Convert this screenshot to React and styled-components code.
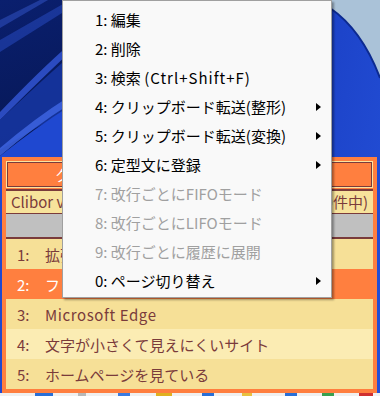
import styled, { createGlobalStyle } from "styled-components";

const GlobalStyle = createGlobalStyle`
  html, body {
    margin: 0;
    padding: 0;
    width: 380px;
    height: 396px;
    overflow: hidden;
  }
`;

const Desktop = styled.div`
  position: relative;
  width: 380px;
  height: 396px;
  overflow: hidden;
  display: flex;
  flex-direction: column;
  justify-content: flex-end;
  font-family: "Noto Sans CJK JP", sans-serif;
`;

const Wallpaper = styled.svg`
  position: absolute;
  left: 0;
  top: 0;
  z-index: 0;
`;

const Window = styled.div`
  position: relative;
  z-index: 1;
  width: 375px;
  margin-left: 2px;
  box-sizing: border-box;
  padding: 4px;
  background: #ff7f3f;
`;

const TitleButton = styled.div`
  height: 27px;
  box-sizing: border-box;
  border: 1px solid #fbe3a0;
  box-shadow: inset 0 0 0 1px #7a3b3b;
  background: #ff7f3f;
  color: #ffffff;
  font-size: 15px;
  line-height: 25px;
  padding-left: 48px;
  margin-bottom: 1px;
  white-space: nowrap;
  overflow: hidden;
`;

const StatusBar = styled.div`
  height: 22px;
  border-top: 2px solid #7a3b3b;
  border-bottom: 1px solid #7a3b3b;
  background: #f7e39b;
  color: #7a3b3b;
  font-size: 15px;
  line-height: 22px;
  padding: 0 5px;
  display: flex;
  justify-content: space-between;
  white-space: nowrap;
`;

const GrayBar = styled.div`
  height: 23px;
  background: #c0c0c0;
  border-bottom: 2px solid #7a3b3b;
`;

const Row = styled.div`
  height: 30px;
  display: flex;
  align-items: center;
  padding-left: 11px;
  font-size: 15px;
  white-space: nowrap;
  color: ${(p) => (p.$selected ? "#ffffff" : "#7a3b3b")};
  background: ${(p) =>
    p.$selected ? "#ff7f3f" : p.$even ? "#fbecb3" : "#f6e097"};
`;

const RowNo = styled.span`
  width: 28px;
`;

/* latin runs are a little wider in the Windows UI font */
const Latin = styled.span`
  letter-spacing: ${(p) => p.$spread || 0.6}px;
`;

const Taskbar = styled.div`
  position: relative;
  z-index: 1;
  height: 3px;
  background: #f0f0f0;
  display: flex;
`;

const TaskIcon = styled.span`
  width: ${(p) => p.$w}px;
  margin-left: ${(p) => p.$x}px;
  background: ${(p) => p.$c};
`;

const Menu = styled.div`
  position: absolute;
  z-index: 2;
  left: 62px;
  top: 0;
  width: 270px;
  box-sizing: border-box;
  padding: 4px 0 2px;
  background: #f9f9f9;
  border: 1px solid #a0a0a0;
  box-shadow: 2px 2px 2px rgba(0, 0, 0, 0.35);
`;

const MenuItem = styled.div`
  height: 29px;
  display: flex;
  align-items: center;
  padding: 0 10px 0 32px;
  font-size: 15px;
  white-space: pre;
  color: ${(p) => (p.$disabled ? "#a0a0a0" : "#000000")};
`;

const Arrow = styled.span`
  margin-left: auto;
  width: 0;
  height: 0;
  border-left: 5px solid #000;
  border-top: 4.5px solid transparent;
  border-bottom: 4.5px solid transparent;
`;

const menuItems = [
  { label: "1: 編集" },
  { label: "2: 削除" },
  { label: "3: 検索 ", latin: "(Ctrl+Shift+F)" },
  { label: "4: クリップボード転送(整形)", sub: true },
  { label: "5: クリップボード転送(変換)", sub: true },
  { label: "6: 定型文に登録", sub: true },
  { label: "7: 改行ごとにFIFOモード", disabled: true },
  { label: "8: 改行ごとにLIFOモード", disabled: true },
  { label: "9: 改行ごとに履歴に展開", disabled: true },
  { label: "0: ページ切り替え", sub: true },
];

const rows = [
  { no: "1:", text: "拡張子" },
  { no: "2:", text: "ファイル", selected: true },
  { no: "3:", latin: "Microsoft Edge" },
  { no: "4:", text: "文字が小さくて見えにくいサイト" },
  { no: "5:", text: "ホームページを見ている" },
];

const taskIcons = [
  { x: 35, w: 18, c: "#2a6fd6" },
  { x: 25, w: 8, c: "#b8b8b8" },
  { x: 32, w: 12, c: "#3b7be0" },
  { x: 26, w: 16, c: "#e0b020" },
  { x: 30, w: 12, c: "#2a6fd6" },
  { x: 28, w: 10, c: "#e8c040" },
  { x: 33, w: 12, c: "#2a6fd6" },
  { x: 25, w: 12, c: "#3aa050" },
  { x: 25, w: 14, c: "#d03030" },
];

const WallpaperArt = () => (
  <Wallpaper width="380" height="396" viewBox="0 0 380 396">
    <defs>
      <linearGradient id="bgL" x1="0" y1="0" x2="0.3" y2="1">
        <stop offset="0" stopColor="#0a1f6e" />
        <stop offset="0.45" stopColor="#061650" />
        <stop offset="1" stopColor="#1c44c8" />
      </linearGradient>
      <linearGradient id="bgR" x1="0" y1="0" x2="1" y2="1">
        <stop offset="0" stopColor="#1a3fc4" />
        <stop offset="1" stopColor="#2450d8" />
      </linearGradient>
    </defs>
    <rect width="380" height="396" fill="url(#bgL)" />
    <path d="M0 40 L70 0 L70 8 L0 52 Z" fill="#2a4ec8" opacity="0.5" />
    <path d="M0 20 L40 0 L48 0 L0 28 Z" fill="#3a5ed8" opacity="0.45" />
    <path d="M0 112 Q40 70 70 44 L70 52 Q40 80 0 120 Z" fill="#3558d8" opacity="0.8" />
    <path d="M0 120 Q40 82 70 56 L70 110 Q30 130 0 150 Z" fill="#1838a8" opacity="0.8" />
    <path d="M0 148 Q35 118 70 96 L70 104 Q35 126 0 156 Z" fill="#3d64e0" opacity="0.85" />
    <path d="M0 156 Q35 128 70 106 L70 396 L0 396 Z" fill="#1f48d0" />
    <rect x="300" y="0" width="80" height="396" fill="url(#bgR)" />
    <path d="M300 0 L380 0 L380 78 Q362 30 330 8 Q316 0 300 0 Z" fill="#aac2d8" />
    <path d="M330 8 Q362 30 380 78" fill="none" stroke="#0c2a90" strokeWidth="2" />
  </Wallpaper>
);

const App = () => {
  return (
    <Desktop>
      <GlobalStyle />
      <WallpaperArt />
      <Window>
        <TitleButton>クリップボード</TitleButton>
        <StatusBar>
          <span>Clibor ver2.3.2</span>
          <span>(5/30件中)</span>
        </StatusBar>
        <GrayBar />
        {rows.map((r, i) => (
          <Row key={r.no} $selected={r.selected} $even={i % 2 === 1}>
            <RowNo>{r.no}</RowNo>
            {r.latin ? <Latin $spread={0.6}>{r.latin}</Latin> : <span>{r.text}</span>}
          </Row>
        ))}
      </Window>
      <Taskbar>
        {taskIcons.map((t, i) => (
          <TaskIcon key={i} $x={t.x} $w={t.w} $c={t.c} />
        ))}
      </Taskbar>
      <Menu>
        {menuItems.map((m) => (
          <MenuItem key={m.label} $disabled={m.disabled}>
            <span>
              {m.label}
              {m.latin && <Latin $spread={1}>{m.latin}</Latin>}
            </span>
            {m.sub && <Arrow />}
          </MenuItem>
        ))}
      </Menu>
    </Desktop>
  );
};

export default App;
